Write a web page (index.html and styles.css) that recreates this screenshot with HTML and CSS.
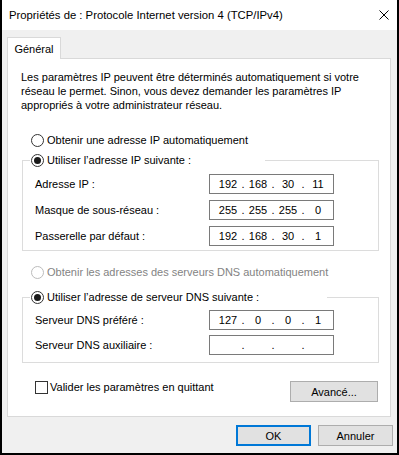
FILE: index.html
```html
<!DOCTYPE html>
<html lang="fr">
<head>
<meta charset="utf-8">
<title>Propriétés de : Protocole Internet version 4 (TCP/IPv4)</title>
<link rel="stylesheet" href="styles.css">
</head>
<body>
<div class="window">
  <div class="titlebar">
    <span class="title">Propriétés de : Protocole Internet version 4 (TCP/IPv4)</span>
    <svg class="close" width="10" height="10" viewBox="0 0 10 10"><path d="M0.5 0.5 L9.5 9.5 M9.5 0.5 L0.5 9.5" stroke="#000" stroke-width="1" fill="none"/></svg>
  </div>
  <div class="body">
    <div class="tabs"><div class="tab">Général</div></div>
    <div class="panel">
      <p class="intro">Les paramètres IP peuvent être déterminés automatiquement si votre<br>réseau le permet. Sinon, vous devez demander les paramètres IP<br>appropriés à votre administrateur réseau.</p>

      <div class="option opt-first"><span class="radio"></span><span>Obtenir une adresse IP automatiquement</span></div>

      <div class="group group-ip">
        <div class="legend legend-ip"><span class="radio on"></span><span>Utiliser l’adresse IP suivante :</span></div>
        <div class="row"><span class="label">Adresse IP :</span>
          <div class="ipbox"><span class="seg">192</span><span class="dot">.</span><span class="seg">168</span><span class="dot">.</span><span class="seg">30</span><span class="dot">.</span><span class="seg">11</span></div>
        </div>
        <div class="row"><span class="label">Masque de sous-réseau :</span>
          <div class="ipbox"><span class="seg">255</span><span class="dot">.</span><span class="seg">255</span><span class="dot">.</span><span class="seg">255</span><span class="dot">.</span><span class="seg">0</span></div>
        </div>
        <div class="row"><span class="label">Passerelle par défaut :</span>
          <div class="ipbox"><span class="seg">192</span><span class="dot">.</span><span class="seg">168</span><span class="dot">.</span><span class="seg">30</span><span class="dot">.</span><span class="seg">1</span></div>
        </div>
      </div>

      <div class="option opt-dns disabled"><span class="radio"></span><span>Obtenir les adresses des serveurs DNS automatiquement</span></div>

      <div class="group group-dns">
        <div class="legend legend-dns"><span class="radio on"></span><span>Utiliser l’adresse de serveur DNS suivante :</span></div>
        <div class="row"><span class="label">Serveur DNS préféré :</span>
          <div class="ipbox"><span class="seg">127</span><span class="dot">.</span><span class="seg">0</span><span class="dot">.</span><span class="seg">0</span><span class="dot">.</span><span class="seg">1</span></div>
        </div>
        <div class="row"><span class="label">Serveur DNS auxiliaire :</span>
          <div class="ipbox"><span class="seg"></span><span class="dot">.</span><span class="seg"></span><span class="dot">.</span><span class="seg"></span><span class="dot">.</span><span class="seg"></span></div>
        </div>
      </div>

      <div class="footer-row">
        <label class="check"><span class="checkbox"></span><span>Valider les paramètres en quittant</span></label>
        <button class="btn btn-adv">Avancé...</button>
      </div>
    </div>
    <div class="actions">
      <button class="btn btn-default">OK</button>
      <button class="btn">Annuler</button>
    </div>
  </div>
</div>
</body>
</html>
```
FILE: styles.css
```css
* { box-sizing: border-box; }
html, body { margin: 0; padding: 0; }
body {
  font: 11px "Liberation Sans", Arial, sans-serif;
  color: #000;
  background: #fff;
}
.window {
  width: 399px;
  height: 455px;
  border: 2px solid #000;
  border-top: 0;
  background: #f0f0f0;
  display: flex;
  flex-direction: column;
}
.titlebar {
  height: 30px;
  flex: none;
  background: #fff;
  display: flex;
  align-items: center;
  justify-content: space-between;
  padding: 0 8px 0 7px;
}
.title { white-space: nowrap; font-size: 11.3px; }
.close { display: block; margin-top: -1px; }
.body {
  padding: 7px 6px 0 5px;
  display: flex;
  flex-direction: column;
}
.tabs { display: flex; }
.tab {
  width: 54px;
  height: 22px;
  border: 1px solid #d9d9d9;
  border-bottom: 0;
  background: #fff;
  margin-bottom: -1px;
  position: relative;
  z-index: 1;
  display: flex;
  align-items: center;
  justify-content: center;
}
.panel {
  height: 359px;
  border: 1px solid #d9d9d9;
  background: #fff;
  display: flex;
  flex-direction: column;
}
.intro {
  margin: 11px 0 0 13px;
  line-height: 14px;
  white-space: nowrap;
}
.option {
  display: flex;
  align-items: center;
  gap: 3px;
  height: 16px;
  margin-left: 23px;
  white-space: nowrap;
}
.opt-first { margin-top: 20px; }
.opt-dns { margin-top: 13px; }
.disabled { color: #838383; }
.radio {
  flex: none;
  width: 13px;
  height: 13px;
  border: 1px solid #333;
  border-radius: 50%;
  background: #fff;
  display: flex;
  align-items: center;
  justify-content: center;
}
.disabled .radio { border-color: #bcbcbc; }
.radio.on::after {
  content: "";
  width: 7px;
  height: 7px;
  border-radius: 50%;
  background: #1a1a1a;
}
.group {
  margin: 0 11px 0 14px;
  border: 1px solid #dcdcdc;
  padding: 0 0 4px 12px;
  display: flex;
  flex-direction: column;
}
.group-ip { margin-top: 12px; }
.group-dns { margin-top: 17px; padding-bottom: 7px; }
.legend {
  align-self: flex-start;
  display: flex;
  align-items: center;
  gap: 3px;
  height: 16px;
  margin: -9px 0 0 -5px;
  padding-left: 1px;
  background: #fff;
  white-space: nowrap;
}
.legend-ip { padding-right: 74px; }
.legend-dns { padding-right: 68px; }
.row {
  display: flex;
  align-items: center;
  height: 20px;
  margin-top: 6px;
}
.group-dns .row { margin-top: 5px; }
.label { width: 174px; white-space: nowrap; }
.ipbox {
  width: 125px;
  height: 20px;
  border: 1px solid #7a7a7a;
  background: #fff;
  display: flex;
  align-items: center;
  padding-left: 5px;
}
.seg { width: 26px; text-align: center; }
.dot { width: 4px; text-align: center; }
.footer-row {
  display: flex;
  align-items: flex-start;
  justify-content: space-between;
  margin: 16px 12px 0 27px;
}
.check {
  display: flex;
  align-items: center;
  gap: 2px;
  height: 16px;
  white-space: nowrap;
}
.checkbox {
  flex: none;
  width: 13px;
  height: 13px;
  border: 1px solid #333;
  background: #fff;
}
.btn {
  font: inherit;
  color: #000;
  height: 21px;
  width: 75px;
  padding: 0;
  background: #e1e1e1;
  border: 1px solid #adadad;
  border-radius: 0;
}
.btn-adv { width: 88px; margin-top: 2px; }
.btn-default { border: 2px solid #0078d7; }
.actions {
  display: flex;
  justify-content: flex-end;
  gap: 7px;
  margin: 8px -2px 0 0;
}
```
